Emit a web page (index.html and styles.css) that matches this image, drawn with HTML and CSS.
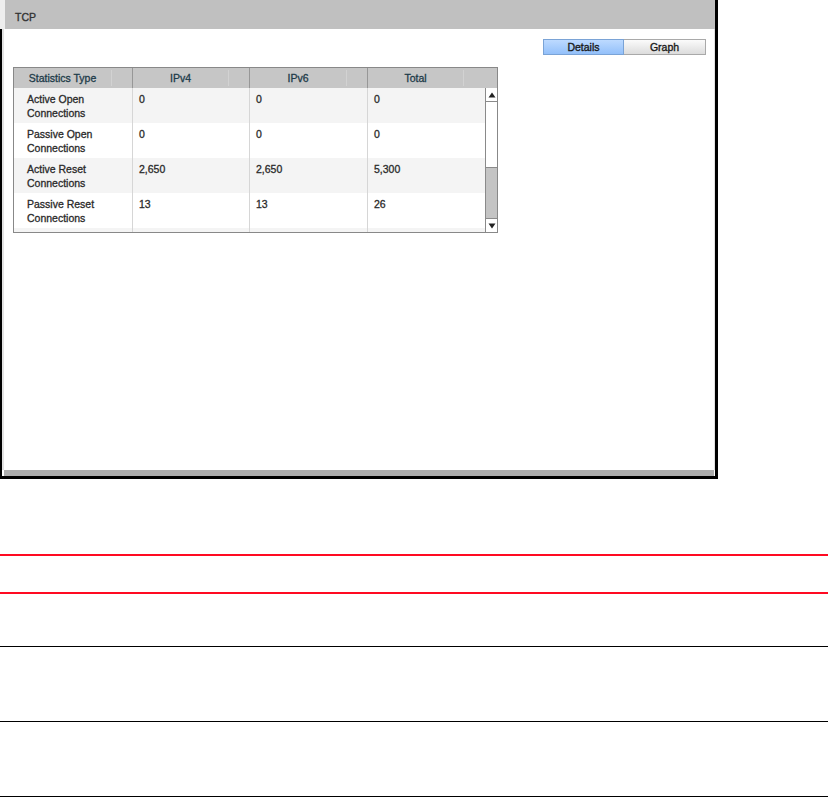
FILE: index.html
```html
<!DOCTYPE html>
<html>
<head>
<meta charset="utf-8">
<link rel="stylesheet" href="styles.css">
</head>
<body>
<div class="page">
  <div class="frame">
    <div class="titlebar">TCP</div>
    <div class="panel">
      <div class="toolbar">
        <div class="seg">
          <div class="seg-btn active">Details</div>
          <div class="seg-btn">Graph</div>
        </div>
      </div>
      <div class="grid">
        <div class="thead">
          <div class="th c1"><span class="th-label">Statistics Type</span><span class="th-sort"></span></div>
          <div class="th c2"><span class="th-label">IPv4</span><span class="th-sort"></span></div>
          <div class="th c3"><span class="th-label">IPv6</span><span class="th-sort"></span></div>
          <div class="th c4 last"><span class="th-label">Total</span><span class="th-sort wide"></span></div>
        </div>
        <div class="tbody">
          <div class="rows">
            <div class="row odd">
              <div class="td c1 name">Active Open<br>Connections</div>
              <div class="td c2">0</div>
              <div class="td c3">0</div>
              <div class="td c4 last">0</div>
            </div>
            <div class="row">
              <div class="td c1 name">Passive Open<br>Connections</div>
              <div class="td c2">0</div>
              <div class="td c3">0</div>
              <div class="td c4 last">0</div>
            </div>
            <div class="row odd">
              <div class="td c1 name">Active Reset<br>Connections</div>
              <div class="td c2">2,650</div>
              <div class="td c3">2,650</div>
              <div class="td c4 last">5,300</div>
            </div>
            <div class="row">
              <div class="td c1 name">Passive Reset<br>Connections</div>
              <div class="td c2">13</div>
              <div class="td c3">13</div>
              <div class="td c4 last">26</div>
            </div>
            <div class="row odd">
              <div class="td c1 name"></div>
              <div class="td c2"></div>
              <div class="td c3"></div>
              <div class="td c4 last"></div>
            </div>
          </div>
          <div class="scrollbar">
            <div class="sb-arrow"><svg width="8" height="6" viewBox="0 0 8 6"><polygon points="4,0.5 7.5,5.5 0.5,5.5" fill="#222"/></svg></div>
            <div class="sb-thumb"></div>
            <div class="sb-track"></div>
            <div class="sb-arrow down"><svg width="8" height="6" viewBox="0 0 8 6"><polygon points="0.5,0.5 7.5,0.5 4,5.5" fill="#222"/></svg></div>
          </div>
        </div>
      </div>
    </div>
    <div class="statusbar"></div>
  </div>
  <div class="rules">
    <div class="rule red"></div>
    <div class="rule red gap-a"></div>
    <div class="rule black gap-b"></div>
    <div class="rule black gap-c"></div>
    <div class="rule black gap-c"></div>
  </div>
</div>
</body>
</html>
```
FILE: styles.css
```css
* { box-sizing: border-box; }
html, body { margin: 0; padding: 0; background: #fff; }
body {
  font-family: "Liberation Sans", Arial, sans-serif;
  font-size: 10.5px;
  color: #333;
}
.page { width: 828px; height: 797px; overflow: hidden; }

.frame {
  width: 718px;
  height: 479px;
  border-left: 2px solid #000;
  border-right: 3px solid #000;
  border-bottom: 3px solid #000;
  display: flex;
  flex-direction: column;
}
.titlebar {
  height: 29px;
  margin-left: -2px;
  border-left: 5px solid #eeeeee;
  background: #c0c0c0;
  padding: 11px 0 0 10px;
  font-size: 10.5px;
  line-height: 12px;
  color: #333;
  -webkit-text-stroke: 0.35px #333;
}
.panel {
  flex: 1;
  border-left: 2px solid #e2e2e2;
  border-right: 1px solid #e2e2e2;
  padding: 10px 8px 0 9px;
  display: flex;
  flex-direction: column;
}
.statusbar {
  height: 6px;
  margin-left: 2px;
  margin-right: 1px;
  background: #adadad;
}

.toolbar { display: flex; justify-content: flex-end; }
.seg { display: flex; }
.seg-btn {
  width: 82px;
  height: 16px;
  border: 1px solid #a9a9a9;
  background: linear-gradient(#fbfbfb, #dcdcdc);
  font-size: 10.5px;
  line-height: 14px;
  text-align: center;
  color: #1a1a1a;
  -webkit-text-stroke: 0.35px #1a1a1a;
}
.seg-btn + .seg-btn { border-left: none; }
.seg-btn.active {
  width: 81px;
  border-color: #7aa3d6;
  background: linear-gradient(#bddaff, #93c0fa);
}

.grid {
  margin-top: 12px;
  width: 485px;
  height: 166px;
  border: 1px solid #888;
  display: flex;
  flex-direction: column;
}
.thead {
  height: 20px;
  display: flex;
  background: #c6c6c6;
}
.th {
  display: flex;
  height: 20px;
  border-right: 1px solid #979797;
  color: #1d3b49;
  line-height: 20px;
  -webkit-text-stroke: 0.3px #1d3b49;
}
.th.last { border-right: none; }
.th-label { flex: 1; text-align: center; }
.th-sort { width: 21px; border-left: 1px solid #d2d2d2; margin: 2px 0; }
.th-sort.wide { width: 34px; }
.c1 { width: 119px; }
.c2 { width: 117px; }
.c3 { width: 118px; }
.c4 { width: 117px; }
.th.c4 { width: 129px; }

.tbody { flex: 1; display: flex; overflow: hidden; }
.rows { width: 471px; display: flex; flex-direction: column; }
.row {
  height: 35px;
  flex: none;
  display: flex;
  background: #fff;
}
.row.odd { background: #f4f4f4; }
.td {
  height: 35px;
  border-right: 1px solid #d6d6d6;
  padding: 4px 0 0 6px;
  line-height: 14px;
  color: #2a2a2a;
  -webkit-text-stroke: 0.3px #2a2a2a;
}
.td.last { border-right: none; }
.td.name { padding-left: 13px; }

.scrollbar {
  width: 12px;
  display: flex;
  flex-direction: column;
  border-left: 1px solid #8a8a8a;
}
.sb-arrow {
  height: 14px;
  background: #fff;
  border-bottom: 1px solid #8a8a8a;
  display: flex;
  align-items: center;
  justify-content: center;
}
.sb-arrow.down { border-bottom: none; border-top: 1px solid #8a8a8a; }
.sb-thumb {
  height: 66px;
  background: #fff;
  border-bottom: 1px solid #8a8a8a;
}
.sb-track {
  flex: 1;
  background: #c4c4c4;
}

.rules { margin-top: 75px; }
.rule { width: 828px; }
.rule.red { height: 2px; background: #ff0a22; }
.rule.red.gap-a { margin-top: 36px; }
.rule.black { height: 1px; background: #000; }
.rule.black.gap-b { margin-top: 52px; }
.rule.black.gap-c { margin-top: 74px; }
```
